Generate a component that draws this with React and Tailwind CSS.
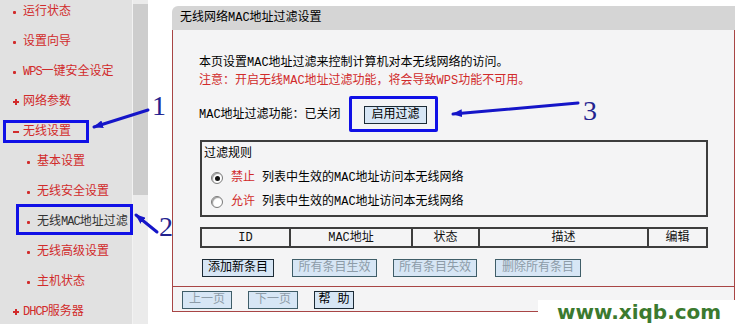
const navItems = [
  { label: '运行状态', level: 0, mark: 'dot' },
  { label: '设置向导', level: 0, mark: 'dot' },
  { label: 'WPS一键安全设定', level: 0, mark: 'dot' },
  { label: '网络参数', level: 0, mark: 'plus' },
  { label: '无线设置', level: 0, mark: 'minus' },
  { label: '基本设置', level: 1, mark: 'dot' },
  { label: '无线安全设置', level: 1, mark: 'dot' },
  { label: '无线MAC地址过滤', level: 1, mark: 'dot', active: true },
  { label: '无线高级设置', level: 1, mark: 'dot' },
  { label: '主机状态', level: 1, mark: 'dot' },
  { label: 'DHCP服务器', level: 0, mark: 'plus' },
]

const columns = [
  { label: 'ID', w: 'w-[87px]' },
  { label: 'MAC地址', w: 'w-[122px] border-l-2' },
  { label: '状态', w: 'w-[67px] border-l-2' },
  { label: '描述', w: 'w-[169px] border-l-2' },
  { label: '编辑', w: 'flex-1 border-l-2' },
]

// latin runs in the menu are narrower in the original bitmap font
function NavLabel({ text }) {
  return text.split(/([A-Za-z]+)/).map((part, i) =>
    /^[A-Za-z]+$/.test(part) ? (
      <span key={i} className="tracking-[-1px]">{part}</span>
    ) : (
      part
    )
  )
}

function Mark({ type }) {
  if (type === 'plus')
    return (
      <svg width="6" height="6" viewBox="0 0 6 6">
        <path d="M2 0h2v2h2v2H4v2H2V4H0V2h2z" fill="#d12b2b" />
      </svg>
    )
  if (type === 'minus') return <span className="block w-[6px] h-[2px] bg-[#d12b2b]" />
  return <span className="block w-[3px] h-[3px] rounded-[1px] bg-[#d12b2b]" />
}

function Btn({ children, disabled, className = '' }) {
  return (
    <button
      className={`flex items-center justify-center h-[18px] border bg-[#d7e6f5] text-[12px] leading-none ${
        disabled ? 'text-[#8d9ca8] border-[#3f5d68]' : 'text-black border-[#1c2b36]'
      } ${className}`}
    >
      {children}
    </button>
  )
}

function Radio({ checked }) {
  return (
    <span className="flex items-center justify-center w-[12px] h-[12px] rounded-full bg-white border border-[#7a7a7a] shadow-[inset_1px_1px_1px_#9a9a9a]">
      {checked && <span className="block w-[5px] h-[5px] rounded-full bg-[#111]" />}
    </span>
  )
}

function Sidebar() {
  return (
    <aside className="flex h-full shrink-0">
      <div className="w-[132px] h-full bg-[#e1e1e1]">
        <nav className="-mt-[3px]">
          {navItems.map((item) => (
            <div
              key={item.label}
              className={`flex items-center h-[30px] ${item.level ? 'pl-[27px]' : 'pl-[13px]'}`}
            >
              <span className="flex items-center w-[10px]">
                <Mark type={item.mark} />
              </span>
              <span
                className={`text-[12px] leading-[18px] whitespace-nowrap ${
                  item.active ? 'text-[#333]' : 'text-[#d12b2b]'
                }`}
              >
                <NavLabel text={item.label} />
              </span>
            </div>
          ))}
        </nav>
      </div>
      <div className="w-[1px] h-full bg-[#f2f2f2]" />
      <div className="w-[15px] h-full flex flex-col bg-[#ebebeb]">
        <div className="h-[4px]" />
        <div className="h-[191px] bg-[#cdcdcd]" />
      </div>
    </aside>
  )
}

function MainPanel() {
  return (
    <section className="ml-[24px] mt-[6px] w-[563px] flex flex-col">
      <div className="h-[24px] flex items-center pl-[8px] bg-[#d5d5d5] rounded-tl-[6px] text-[12px] text-black">
        无线网络MAC地址过滤设置
      </div>
      <div className="border-x border-b border-[#a84545] bg-[#f4f4f5]">
        <div className="pt-[24px] pl-[26px] pb-[9px] text-[12px] leading-[18px]">
          <p className="text-black">本页设置MAC地址过滤来控制计算机对本无线网络的访问。</p>
          <p className="text-[#d12b2b]">注意：开启无线MAC地址过滤功能，将会导致WPS功能不可用。</p>

          <div className="flex items-center mt-[16px] h-[18px]">
            <span className="w-[165px] text-black">MAC地址过滤功能：已关闭</span>
            <Btn className="w-[63px]">启用过滤</Btn>
          </div>

          <div className="mt-[16px] ml-[1px] w-[508px] h-[77px] border-2 border-[#3d3d3d] pt-[3px] pl-[2px]">
            <div className="text-black">过滤规则</div>
            <div className="mt-[3px] flex items-center h-[24px] pl-[7px]">
              <Radio checked />
              <span className="ml-[8px] text-[#d12b2b]">禁止</span>
              <span className="ml-[7px] text-black">列表中生效的MAC地址访问本无线网络</span>
            </div>
            <div className="flex items-center h-[24px] pl-[7px]">
              <Radio />
              <span className="ml-[8px] text-[#d12b2b]">允许</span>
              <span className="ml-[7px] text-black">列表中生效的MAC地址访问本无线网络</span>
            </div>
          </div>

          <div className="mt-[10px] ml-[1px] w-[508px] h-[21px] flex border-2 border-[#3d3d3d]">
            {columns.map((c) => (
              <div
                key={c.label}
                className={`${c.w} border-[#3d3d3d] flex items-center justify-center text-[#111]`}
              >
                {c.label}
              </div>
            ))}
          </div>

          <div className="mt-[11px] ml-[3px] flex gap-[18px]">
            <Btn className="w-[72px] h-[17px]">添加新条目</Btn>
            <Btn disabled className="w-[85px] h-[17px]">所有条目生效</Btn>
            <Btn disabled className="w-[84px] h-[17px] -ml-[2px]">所有条目失效</Btn>
            <Btn disabled className="w-[86px] h-[17px]">删除所有条目</Btn>
          </div>
        </div>
        <div className="border-t border-[#a84545] h-[25px] flex items-start pt-[4px] pl-[9px] gap-[16px]">
          <Btn disabled className="w-[50px] h-[18px]">上一页</Btn>
          <Btn disabled className="w-[50px] h-[18px]">下一页</Btn>
          <Btn className="w-[40px] h-[18px]">帮 助</Btn>
        </div>
      </div>
    </section>
  )
}

function Annotations() {
  return (
    <>
      {/* highlight boxes */}
      <div className="absolute left-[3px] top-[120px] w-[86px] h-[23px] border-[3px] border-[#1010e6]" />
      <div className="absolute left-[16px] top-[204px] w-[117px] h-[31px] border-[3px] border-[#1010e6]" />
      <div className="absolute left-[349px] top-[96px] w-[89px] h-[36px] border-[3px] border-[#1010e6] rounded-[2px]" />

      <svg className="absolute inset-0 pointer-events-none" width="740" height="324">
        <defs>
          <marker id="ah" markerUnits="userSpaceOnUse" markerWidth="10" markerHeight="8" refX="9" refY="4" orient="auto">
            <path d="M0 0L10 4L0 8z" fill="#1515c8" />
          </marker>
        </defs>
        <line x1="148" y1="110" x2="94" y2="127" stroke="#1515c8" strokeWidth="3" strokeLinecap="round" markerEnd="url(#ah)" />
        <line x1="157" y1="232" x2="136" y2="215" stroke="#1515c8" strokeWidth="3" strokeLinecap="round" markerEnd="url(#ah)" />
        <line x1="578" y1="103" x2="453" y2="114" stroke="#1515c8" strokeWidth="3" strokeLinecap="round" markerEnd="url(#ah)" />
      </svg>

      <div className="absolute left-[152px] top-[92px] text-[28px] leading-none text-[#23238f] font-['Liberation_Serif',serif]">1</div>
      <div className="absolute left-[159px] top-[213px] text-[28px] leading-none text-[#23238f] font-['Liberation_Serif',serif]">2</div>
      <div className="absolute left-[583px] top-[97px] text-[28px] leading-none text-[#23238f] font-['Liberation_Serif',serif]">3</div>

      {/* watermark */}
      <div className="absolute left-[538px] top-[300px] w-[197px] h-[24px] bg-white pl-[19px] text-[20px] leading-[24px] font-bold text-[#3b7a2f] font-['DejaVu_Sans',sans-serif]">
        www.xiqb.com
      </div>
    </>
  )
}

export default function App() {
  return (
    <div className="relative w-[740px] h-[324px] overflow-hidden bg-white flex font-['Liberation_Mono','Noto_Sans_CJK_SC',monospace]">
      <Sidebar />
      <MainPanel />
      <Annotations />
    </div>
  )
}
